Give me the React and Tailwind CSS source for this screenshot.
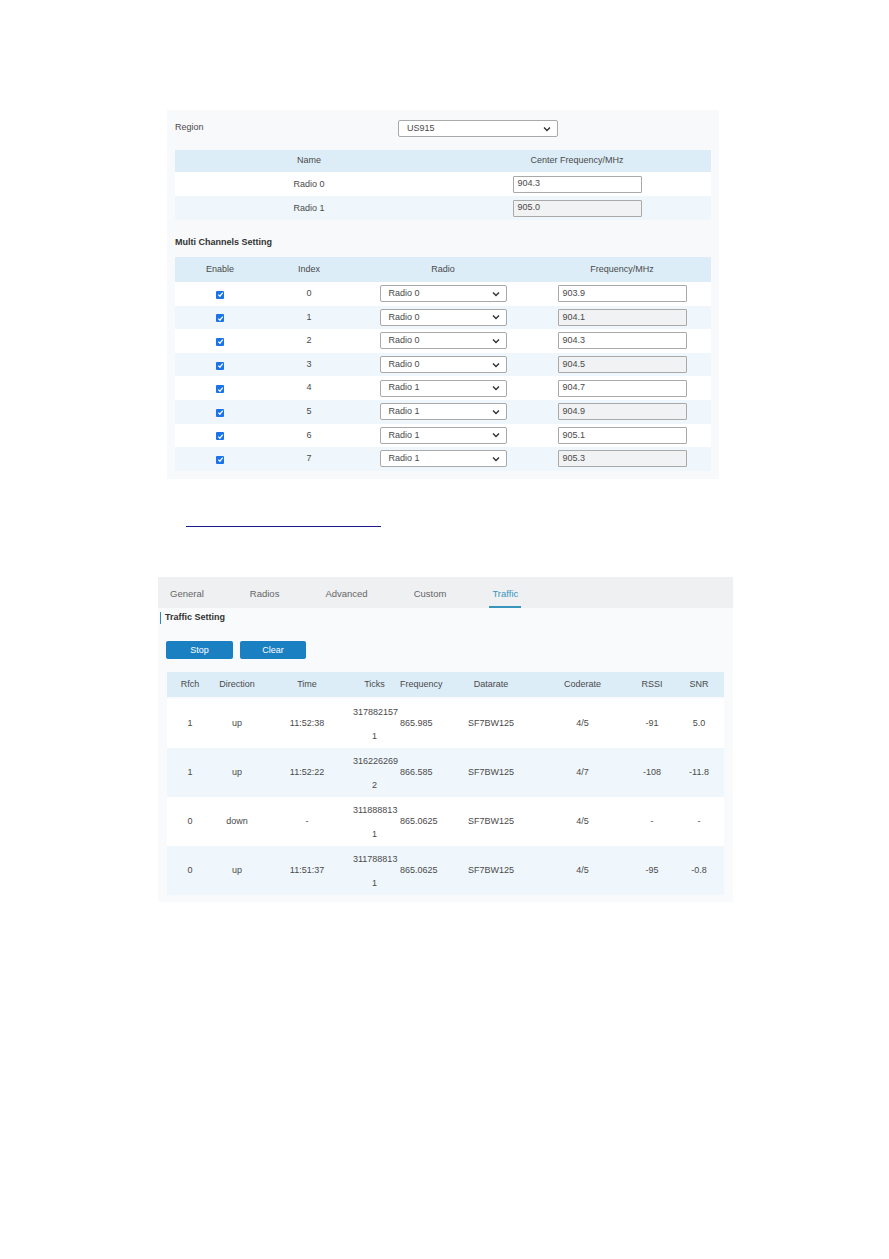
import React from "react";

const font = { fontFamily: '"Liberation Sans", Arial, sans-serif' };

function Chevron() {
  return (
    <svg width="8" height="6" viewBox="0 0 8 6" className="shrink-0">
      <path d="M1 1.5 L4 4.5 L7 1.5" fill="none" stroke="#333" strokeWidth="1.4" />
    </svg>
  );
}

function Select({ value, w }) {
  return (
    <div className={`${w} h-[17px] border border-[#a9a9a9] rounded-[2px] bg-white flex items-center justify-between pl-[8px] pr-[6px] text-[#4a4a4a]`}>
      <span>{value}</span>
      <Chevron />
    </div>
  );
}

function Input({ value, disabled }) {
  return (
    <div className={`w-[129px] h-[17px] border border-[#a9a9a9] rounded-[1px] flex items-center pl-[4px] text-[#4a4a4a] ${disabled ? "bg-[#f1f2f3]" : "bg-white"}`}>
      {value}
    </div>
  );
}

function Check() {
  return (
    <div className="w-[8px] h-[8px] rounded-[1px] bg-[#1a73e8] flex items-center justify-center">
      <svg width="7" height="7" viewBox="0 0 8 8">
        <path d="M1.5 4.2 L3.3 6 L6.6 1.8" fill="none" stroke="#fff" strokeWidth="1.4" />
      </svg>
    </div>
  );
}

const channels = [
  ["0", "Radio 0", "903.9"],
  ["1", "Radio 0", "904.1"],
  ["2", "Radio 0", "904.3"],
  ["3", "Radio 0", "904.5"],
  ["4", "Radio 1", "904.7"],
  ["5", "Radio 1", "904.9"],
  ["6", "Radio 1", "905.1"],
  ["7", "Radio 1", "905.3"],
];

const traffic = [
  ["1", "up", "11:52:38", "317882157", "1", "865.985", "SF7BW125", "4/5", "-91", "5.0"],
  ["1", "up", "11:52:22", "316226269", "2", "866.585", "SF7BW125", "4/7", "-108", "-11.8"],
  ["0", "down", "-", "311888813", "1", "865.0625", "SF7BW125", "4/5", "-", "-"],
  ["0", "up", "11:51:37", "311788813", "1", "865.0625", "SF7BW125", "4/5", "-95", "-0.8"],
];

const cols = "grid grid-cols-[46px_48px_92px_43px_51px_88px_95px_44px_50px]";

export default function App() {
  return (
    <div className="w-[889px] h-[1259px] bg-white text-[9px] text-[#4a4a4a]" style={font}>
      <div className="pt-[110px] pl-[167px]">
        {/* Top panel */}
        <div className="w-[552px] bg-[#f8f9fa] px-2 pt-[10px] pb-[8px]">
          <div className="flex items-center h-[17px]">
            <div className="w-[223px] -mt-[1px]">Region</div>
            <Select value="US915" w="w-[160px]" />
          </div>
          <div className="mt-[13px]">
            <div className="grid grid-cols-2 h-[22px] bg-[#dcedf8] items-center text-center">
              <div>Name</div>
              <div>Center Frequency/MHz</div>
            </div>
            <div className="grid grid-cols-2 h-[24px] bg-white items-center">
              <div className="text-center pt-[1px]">Radio 0</div>
              <div className="flex justify-center"><Input value="904.3" /></div>
            </div>
            <div className="grid grid-cols-2 h-[24px] bg-[#eff7fc] items-center">
              <div className="text-center pt-[1px]">Radio 1</div>
              <div className="flex justify-center"><Input value="905.0" disabled /></div>
            </div>
          </div>
          <div className="h-[37px] pt-[16px] font-bold text-[#333]">Multi Channels Setting</div>
          <div>
            <div className="grid grid-cols-[90px_88px_180px_178px] h-[25px] bg-[#dcedf8] items-center text-center">
              <div>Enable</div>
              <div>Index</div>
              <div>Radio</div>
              <div>Frequency/MHz</div>
            </div>
            {channels.map(([i, r, f], idx) => (
              <div
                key={i}
                className={`grid grid-cols-[90px_88px_180px_178px] h-[23.6px] items-center ${idx % 2 ? "bg-[#eff7fc]" : "bg-white"}`}
              >
                <div className="flex justify-center pt-[2px]"><Check /></div>
                <div className="text-center">{i}</div>
                <div className="flex justify-center"><Select value={r} w="w-[127px]" /></div>
                <div className="flex justify-center"><Input value={f} disabled={idx % 2 === 1} /></div>
              </div>
            ))}
          </div>
        </div>
      </div>

      {/* Link underline */}
      <div className="mt-[47px] ml-[186px] w-[195px] h-px bg-[#1a1a8c]" />

      {/* Bottom panel */}
      <div className="mt-[50px] ml-[158px] w-[575px] bg-[#f8fafb] pb-[7px]">
        <div className="h-[31px] bg-[#eef0f2] flex pl-[9px] gap-[40px] text-[9.5px] text-[#666]">
          {["General", "Radios", "Advanced", "Custom"].map((t) => (
            <div key={t} className="px-[3px] flex items-center pt-[3px]">{t}</div>
          ))}
          <div className="px-[3px] flex items-center text-[#3a95bd] border-b-2 border-[#3a95bd] pt-[5px]">Traffic</div>
        </div>
        <div className="mt-[4px] h-[12px] flex items-center pl-[2px]">
          <div className="w-px h-[12px] bg-[#2a8ab3]" />
          <div className="ml-[4px] font-bold text-[#333]">Traffic Setting</div>
        </div>
        <div className="mt-[17px] ml-[8px] flex gap-[7px]">
          <div className="w-[67px] h-[18px] rounded-[2px] bg-[#1b80c2] text-white flex items-center justify-center pt-[1px]">Stop</div>
          <div className="w-[66px] h-[18px] rounded-[2px] bg-[#1b80c2] text-white flex items-center justify-center pt-[1px]">Clear</div>
        </div>
        <div className="mt-[13px] mx-[9px]">
          <div className={`${cols} h-[25px] bg-[#dcedf8] items-center text-center pt-[1px]`}>
            <div>Rfch</div>
            <div>Direction</div>
            <div>Time</div>
            <div>Ticks</div>
            <div className="text-left pl-[4px]">Frequency</div>
            <div>Datarate</div>
            <div>Coderate</div>
            <div>RSSI</div>
            <div>SNR</div>
          </div>
          <div className="h-[2px]" />
          {traffic.map((r, idx) => (
            <div
              key={idx}
              className={`${cols} h-[49px] items-center text-center pt-[1px] ${idx % 2 ? "bg-[#eff7fc]" : "bg-white"}`}
            >
              <div>{r[0]}</div>
              <div>{r[1]}</div>
              <div>{r[2]}</div>
              <div className="leading-[24px]">
                <div>{r[3]}</div>
                <div>{r[4]}</div>
              </div>
              <div className="text-left pl-[4px]">{r[5]}</div>
              <div>{r[6]}</div>
              <div>{r[7]}</div>
              <div>{r[8]}</div>
              <div>{r[9]}</div>
            </div>
          ))}
        </div>
      </div>
    </div>
  );
}
